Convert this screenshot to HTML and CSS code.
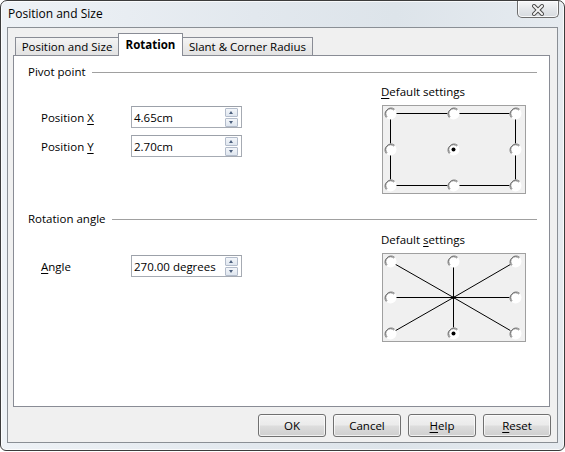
FILE: index.html
```html
<!DOCTYPE html>
<html>
<head>
<meta charset="utf-8">
<link rel="stylesheet" href="styles.css">
</head>
<body>
<div class="window">
  <div class="titlebar">
    <span class="title">Position and Size</span>
    <div class="close">
      <svg width="12" height="12" viewBox="0 0 12 12">
        <path d="M2 2 L10 10 M10 2 L2 10" stroke="#4a4a4a" stroke-width="4" stroke-linecap="square" fill="none"/>
        <path d="M2 2 L10 10 M10 2 L2 10" stroke="#f4f4f4" stroke-width="2" stroke-linecap="square" fill="none"/>
      </svg>
    </div>
  </div>
  <div class="frame">
    <div class="client">
      <div class="tabs">
        <div class="tab tab-pos">Position and Size</div>
        <div class="tab tab-rot active">Rotation</div>
        <div class="tab tab-slant">Slant &amp; Corner Radius</div>
      </div>
      <div class="panel">
        <section class="group">
          <div class="group-head"><span>Pivot point</span></div>
          <div class="group-body">
            <div class="fields fields-pivot">
              <div class="field">
                <span class="label">Position <u>X</u></span>
                <div class="spin"><span class="val">4.65cm</span><span class="spin-btns"><span class="sb up"></span><span class="sb down"></span></span></div>
              </div>
              <div class="field">
                <span class="label">Position <u>Y</u></span>
                <div class="spin"><span class="val">2.70cm</span><span class="spin-btns"><span class="sb up"></span><span class="sb down"></span></span></div>
              </div>
            </div>
            <div class="defaults">
              <div class="def-label"><u>D</u>efault settings</div>
              <div class="def-box">
                <svg width="142" height="87" viewBox="0 0 142 87">
                  <defs>
                    <g id="radio">
                      <circle cx="0" cy="0" r="6" fill="#ffffff"/>
                      <path d="M4.2 -4.2 A6 6 0 0 0 -4.2 4.2" stroke="#8a8a8a" stroke-width="1" fill="none"/>
                      <path d="M3.4 -3.4 A4.8 4.8 0 0 0 -3.4 3.4" stroke="#505050" stroke-width="0.8" fill="none"/>
                    </g>
                  </defs>
                  <path d="M7.5 7.5 H132.5 V79.5 H7.5 Z" stroke="#000" stroke-width="1" fill="none"/>
                  <use href="#radio" x="7.5" y="7.5"/>
                  <use href="#radio" x="70.5" y="7.5"/>
                  <use href="#radio" x="132.5" y="7.5"/>
                  <use href="#radio" x="7.5" y="43.5"/>
                  <use href="#radio" x="70.5" y="43.5"/>
                  <use href="#radio" x="132.5" y="43.5"/>
                  <use href="#radio" x="7.5" y="79.5"/>
                  <use href="#radio" x="70.5" y="79.5"/>
                  <use href="#radio" x="132.5" y="79.5"/>
                  <circle cx="70.5" cy="43.5" r="2" fill="#000"/>
                </svg>
              </div>
            </div>
          </div>
        </section>
        <section class="group group-angle">
          <div class="group-head"><span>Rotation angle</span></div>
          <div class="group-body body-angle">
            <div class="fields fields-angle">
              <div class="field">
                <span class="label"><u>A</u>ngle</span>
                <div class="spin"><span class="val">270.00 degrees</span><span class="spin-btns"><span class="sb up"></span><span class="sb down"></span></span></div>
              </div>
            </div>
            <div class="defaults">
              <div class="def-label">Default <u>s</u>ettings</div>
              <div class="def-box">
                <svg width="142" height="87" viewBox="0 0 142 87">
                  <defs>
                    <g id="radio2">
                      <circle cx="0" cy="0" r="6" fill="#ffffff"/>
                      <path d="M4.2 -4.2 A6 6 0 0 0 -4.2 4.2" stroke="#8a8a8a" stroke-width="1" fill="none"/>
                      <path d="M3.4 -3.4 A4.8 4.8 0 0 0 -3.4 3.4" stroke="#505050" stroke-width="0.8" fill="none"/>
                    </g>
                  </defs>
                  <path d="M70.5 43.5 L7.5 7.5 M70.5 43.5 L70.5 7.5 M70.5 43.5 L132.5 7.5 M70.5 43.5 L7.5 43.5 M70.5 43.5 L132.5 43.5 M70.5 43.5 L7.5 79.5 M70.5 43.5 L70.5 79.5 M70.5 43.5 L132.5 79.5" stroke="#000" stroke-width="1" fill="none"/>
                  <circle cx="70.5" cy="43.5" r="1.6" fill="#000"/>
                  <use href="#radio2" x="7.5" y="7.5"/>
                  <use href="#radio2" x="70.5" y="7.5"/>
                  <use href="#radio2" x="132.5" y="7.5"/>
                  <use href="#radio2" x="7.5" y="43.5"/>
                  <use href="#radio2" x="132.5" y="43.5"/>
                  <use href="#radio2" x="7.5" y="79.5"/>
                  <use href="#radio2" x="70.5" y="79.5"/>
                  <use href="#radio2" x="132.5" y="79.5"/>
                  <circle cx="70.5" cy="79.5" r="2" fill="#000"/>
                </svg>
              </div>
            </div>
          </div>
        </section>
      </div>
      <div class="buttons">
        <button class="btn">OK</button>
        <button class="btn">Cancel</button>
        <button class="btn"><u>H</u>elp</button>
        <button class="btn"><u>R</u>eset</button>
      </div>
    </div>
  </div>
</div>
</body>
</html>
```
FILE: styles.css
```css
html, body {
  margin: 0;
  padding: 0;
  background: #ffffff;
}
body {
  font-family: "Open Sans", "Noto Sans", sans-serif;
  font-size: 11.5px;
  color: #000;
}
.window {
  width: 565px;
  height: 451px;
  box-sizing: border-box;
  border: 1px solid #3c3c3c;
  border-radius: 7px 7px 6px 6px;
  background: linear-gradient(to right, #eef2f6 0%, #e2e8ee 45%, #dde4ea 70%, #e6ebf0 100%);
  box-shadow: inset 0 0 0 1px rgba(255,255,255,0.75);
  display: flex;
  flex-direction: column;
  overflow: hidden;
}
.titlebar {
  height: 26px;
  display: flex;
  align-items: center;
  flex-shrink: 0;
}
.title {
  padding-left: 7px;
  line-height: 14px;
  font-size: 12px;
}
.close {
  margin-left: auto;
  margin-right: 5px;
  align-self: flex-start;
  width: 40px;
  height: 16px;
  border: 1px solid #6d6d6d;
  border-top: none;
  border-radius: 0 0 5px 5px;
  background: linear-gradient(#f6f7f8, #e3e6e9 55%, #d6dadf);
  box-shadow: inset 0 0 0 1px rgba(255,255,255,0.8);
  display: flex;
  align-items: center;
  justify-content: center;
}
.close svg { display: block; margin-top: 2px; }
.frame {
  padding: 0 6px 7px 6px;
  display: flex;
}
.client {
  width: 551px;
  height: 416px;
  box-sizing: border-box;
  border: 1px solid #8a8f95;
  background: #f0f0f0;
  padding: 5px 7px 5px 5px;
  display: flex;
  flex-direction: column;
}
.tabs {
  height: 22px;
  display: flex;
  align-items: flex-end;
  padding-left: 2px;
  position: relative;
  z-index: 1;
}
.tab {
  box-sizing: border-box;
  height: 18px;
  border: 1px solid #898c95;
  border-bottom: none;
  background: linear-gradient(#f4f4f4, #ebebeb 50%, #e2e2e2);
  text-align: center;
  line-height: 18px;
  white-space: nowrap;
}
.tab-pos { width: 104px; margin-right: -1px; }
.tab-rot { width: 65px; }
.tab-slant { width: 131px; margin-left: -1px; }
.tab.active {
  height: 23px;
  margin-bottom: -1px;
  background: #ffffff;
  font-weight: bold;
  line-height: 21px;
  position: relative;
  z-index: 2;
}
.panel {
  height: 352px;
  box-sizing: border-box;
  border: 1px solid #898c95;
  background: #ffffff;
  padding: 9px 12px 0 14px;
}
.group-head {
  display: flex;
  align-items: center;
  height: 14px;
  line-height: 14px;
}
.group-head::after {
  content: "";
  flex: 1;
  height: 1px;
  background: #a0a0a0;
  margin-left: 6px;
}
.group-body {
  display: flex;
  margin-top: 6px;
}
.group-angle { margin-top: 18px; }
.body-angle { margin-top: 7px; }
.fields {
  width: 353px;
  box-sizing: border-box;
  padding-left: 13px;
  display: flex;
  flex-direction: column;
  gap: 7px;
}
.fields-pivot { padding-top: 21px; }
.fields-angle { padding-top: 22px; }
.field {
  display: flex;
  align-items: center;
  height: 22px;
}
.label {
  width: 90px;
  flex-shrink: 0;
}
u { text-decoration: underline; text-underline-offset: 2px; }
.spin {
  width: 111px;
  height: 22px;
  box-sizing: border-box;
  border: 1px solid #a6abb3;
  border-top-color: #9ca1a9;
  background: #fff;
  display: flex;
  align-items: center;
  padding-left: 2px;
}
.val { flex: 1; }
.spin-btns {
  display: flex;
  flex-direction: column;
  gap: 1px;
  margin-right: 3px;
}
.sb {
  display: block;
  width: 11px;
  height: 7px;
  border: 1px solid #b3bccb;
  border-radius: 1px;
  background: linear-gradient(#f3f6fa, #dfe6ef);
  position: relative;
}
.sb::after {
  content: "";
  position: absolute;
  left: 3px;
  width: 0;
  height: 0;
  border-left: 2.5px solid transparent;
  border-right: 2.5px solid transparent;
}
.up::after { top: 2px; border-bottom: 3px solid #4c607e; }
.down::after { top: 2px; border-top: 3px solid #4c607e; }
.defaults {
  width: 144px;
}
.def-label {
  height: 14px;
  line-height: 14px;
}
.def-box {
  margin-top: 6px;
  margin-left: 1px;
  width: 144px;
  height: 89px;
  box-sizing: border-box;
  border: 1px solid #a0a0a0;
  background: #f0f0f0;
}
.def-box svg { display: block; }
.buttons {
  margin-top: 7px;
  margin-right: -1px;
  display: flex;
  justify-content: flex-end;
  gap: 7px;
}
.btn {
  width: 68px;
  height: 23px;
  box-sizing: border-box;
  border: 1px solid #707070;
  border-radius: 3px;
  background: linear-gradient(#f2f2f2 0%, #ebebeb 48%, #dddddd 52%, #cfcfcf 100%);
  box-shadow: inset 0 0 0 1px rgba(255,255,255,0.7);
  font-family: inherit;
  font-size: 11.5px;
  color: #000;
  padding: 0;
}
```
